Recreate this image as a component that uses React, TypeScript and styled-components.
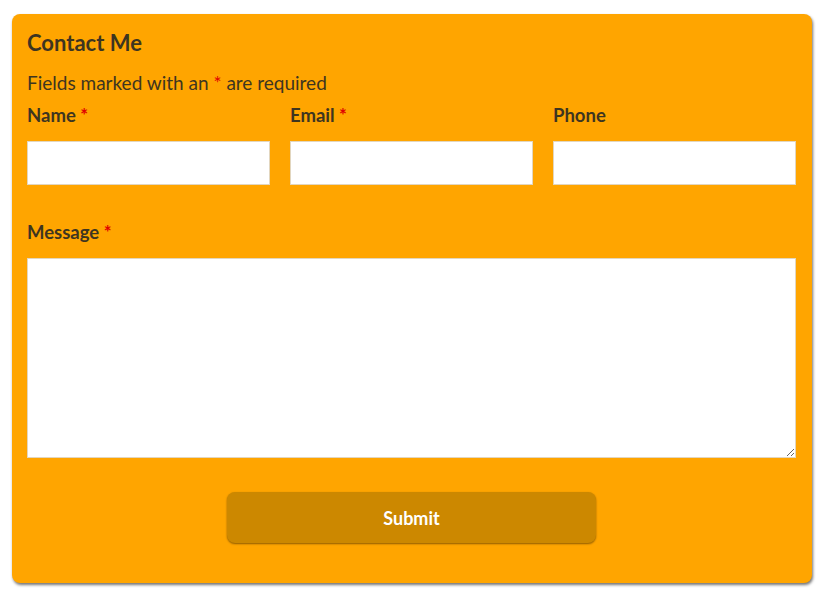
import React from "react";
import styled, { createGlobalStyle } from "styled-components";

const GlobalStyle = createGlobalStyle`
  body {
    margin: 0;
    background: #fff;
    font-family: Lato, "Open Sans", sans-serif;
  }
`;

const Page = styled.div`
  padding: 14px 14px 8px 12px;
`;

const Card = styled.form`
  width: 800px;
  box-sizing: border-box;
  background-color: #ffa500;
  border-radius: 8px;
  padding: 14px 16px 40px 15px;
  box-shadow: 1px 2px 3px rgba(0, 0, 0, 0.55);
  color: #3e3520;
`;

const Title = styled.h2`
  margin: 0;
  font-size: 22px;
  font-weight: 700;
  line-height: 30px;
`;

const Note = styled.p`
  margin: 13px 0 0;
  font-size: 19px;
  line-height: 24px;
`;

const Star = styled.span`
  color: #e00000;
`;

const FieldRow = styled.div`
  display: grid;
  grid-template-columns: repeat(3, 1fr);
  gap: 20px;
  margin-top: 8px;
`;

const Field = styled.div`
  display: flex;
  flex-direction: column;
`;

const Label = styled.label`
  font-size: 18.5px;
  font-weight: 700;
  line-height: 24px;
  margin-bottom: 14px;
`;

const Input = styled.input`
  height: 44px;
  box-sizing: border-box;
  border: 1px solid #e2d6bf;
  background: #fff;
  outline: none;
`;

const MessageField = styled(Field)`
  margin-top: 35px;
`;

const TextArea = styled.textarea`
  height: 200px;
  box-sizing: border-box;
  border: 1px solid #e2d6bf;
  background: #fff;
  outline: none;
  margin: 0;
  display: block;
`;

const ButtonRow = styled.div`
  display: flex;
  justify-content: center;
  margin-top: 34px;
`;

const SubmitButton = styled.button`
  width: 369px;
  height: 51px;
  border: none;
  border-radius: 8px;
  background-color: #cc8800;
  color: #fff;
  font-family: Lato, "Open Sans", sans-serif;
  font-size: 18px;
  font-weight: 700;
  box-shadow: 0 1px 2px rgba(0, 0, 0, 0.45);
  cursor: pointer;
`;

const App = () => {
  return (
    <Page>
      <GlobalStyle />
      <Card onSubmit={(e) => e.preventDefault()}>
        <Title>Contact Me</Title>
        <Note>
          Fields marked with an <Star>*</Star> are required
        </Note>
        <FieldRow>
          <Field>
            <Label>
              Name <Star>*</Star>
            </Label>
            <Input type="text" />
          </Field>
          <Field>
            <Label>
              Email <Star>*</Star>
            </Label>
            <Input type="email" />
          </Field>
          <Field>
            <Label>Phone</Label>
            <Input type="tel" />
          </Field>
        </FieldRow>
        <MessageField>
          <Label>
            Message <Star>*</Star>
          </Label>
          <TextArea />
        </MessageField>
        <ButtonRow>
          <SubmitButton type="submit">Submit</SubmitButton>
        </ButtonRow>
      </Card>
    </Page>
  );
};

export default App;
